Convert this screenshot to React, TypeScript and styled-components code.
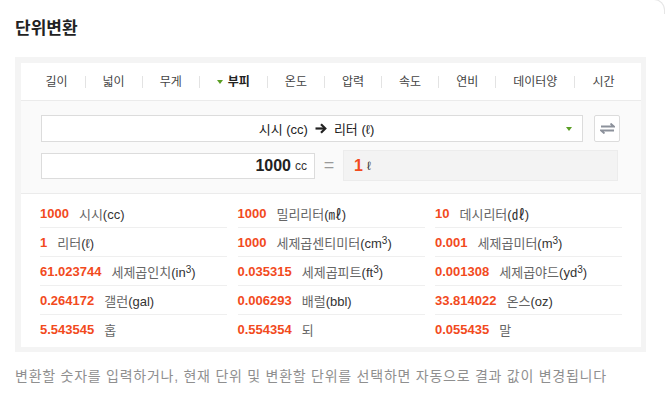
import React from "react";
import styled, { createGlobalStyle } from "styled-components";

const GlobalStyle = createGlobalStyle`
  html, body {
    margin: 0;
    padding: 0;
    background: #ffffff;
    overflow: hidden;
  }
  body {
    font-family: "Liberation Sans", "Noto Sans CJK KR", sans-serif;
    color: #333;
  }
`;

const colors = {
  panel: "#f4f4f4",
  line: "#ebebeb",
  tabText: "#444",
  green: "#5a9e24",
  value: "#f24a1d",
  label: "#666",
  unit: "#333",
  note: "#8f8f8f",
};

const tabs = ["길이", "넓이", "무게", "부피", "온도", "압력", "속도", "연비", "데이터양", "시간"];

type Result = { value: string; label: string; unit?: string; cube?: boolean };

const results: Result[] = [
  { value: "1000", label: "시시", unit: "cc" },
  { value: "1000", label: "밀리리터", unit: "㎖" },
  { value: "10", label: "데시리터", unit: "㎗" },
  { value: "1", label: "리터", unit: "ℓ" },
  { value: "1000", label: "세제곱센티미터", unit: "cm", cube: true },
  { value: "0.001", label: "세제곱미터", unit: "m", cube: true },
  { value: "61.023744", label: "세제곱인치", unit: "in", cube: true },
  { value: "0.035315", label: "세제곱피트", unit: "ft", cube: true },
  { value: "0.001308", label: "세제곱야드", unit: "yd", cube: true },
  { value: "0.264172", label: "갤런", unit: "gal" },
  { value: "0.006293", label: "배럴", unit: "bbl" },
  { value: "33.814022", label: "온스", unit: "oz" },
  { value: "5.543545", label: "홉" },
  { value: "0.554354", label: "되" },
  { value: "0.055435", label: "말" },
];

const Page = styled.div`
  position: relative;
  padding: 19px 20px 0 15px;

  /* corner of the surrounding card */
  &::after {
    content: "";
    position: absolute;
    top: -1px;
    right: 1px;
    width: 14px;
    height: 14px;
    border-top: 1px solid #e6e6e6;
    border-right: 1px solid #e6e6e6;
    border-top-right-radius: 11px;
  }
`;

const Title = styled.h2`
  margin: 0 0 18px;
  font-size: 17px;
  line-height: 20px;
  font-weight: 700;
  color: #222;
`;

const Panel = styled.div`
  width: 631px;
  box-sizing: border-box;
  background: ${colors.panel};
  padding: 6px 5px 5px 6px;
`;

const Inner = styled.div`
  background: #fff;
`;

const TabBar = styled.ul`
  display: flex;
  justify-content: center;
  align-items: center;
  height: 37px;
  margin: 0;
  padding: 0 2px 0 0;
  list-style: none;
  border-bottom: 1px solid ${colors.line};
`;

const Tab = styled.li<{ $active?: boolean }>`
  display: flex;
  align-items: center;
  gap: 5px;
  padding: 0 17px;
  font-size: 12px;
  line-height: 16px;
  color: ${({ $active }) => ($active ? "#222" : colors.tabText)};
  font-weight: ${({ $active }) => ($active ? 700 : 400)};
  white-space: nowrap;
`;

const TabSep = styled.li`
  width: 1px;
  height: 12px;
  background: #e3e3e3;
`;

const Caret = styled.span`
  width: 0;
  height: 0;
  border-left: 3px solid transparent;
  border-right: 3px solid transparent;
  border-top: 4px solid ${colors.green};
`;

const Converter = styled.div`
  background: #fafafa;
  border-bottom: 1px solid ${colors.line};
  padding: 14px 21px 12px 20px;
  display: flex;
  flex-direction: column;
  gap: 8px;
`;

const SelectRow = styled.div`
  display: flex;
  gap: 11px;
`;

const Select = styled.div`
  flex: 1;
  height: 27px;
  box-sizing: border-box;
  border: 1px solid #dcdcdc;
  background: #fff;
  display: flex;
  align-items: center;
  padding: 0 10px 0 25px;
  font-size: 13px;
  color: #222;
`;

const SelectText = styled.span`
  flex: 1;
  display: flex;
  align-items: center;
  justify-content: center;
  gap: 7px;
  white-space: nowrap;
`;

const SwapButton = styled.button`
  width: 26px;
  height: 27px;
  box-sizing: border-box;
  border: 1px solid #dcdcdc;
  border-radius: 2px;
  background: #fff;
  padding: 0;
  display: flex;
  align-items: center;
  justify-content: center;
`;

const InputRow = styled.div`
  display: grid;
  grid-template-columns: 274px 28px 275px;
  align-items: center;
  height: 31px;
`;

const Input = styled.div`
  height: 26px;
  box-sizing: border-box;
  border: 1px solid #dcdcdc;
  background: #fff;
  display: flex;
  align-items: center;
  justify-content: flex-end;
  gap: 4px;
  padding: 0 7px;
`;

const Big = styled.span<{ $color?: string }>`
  font-size: 16px;
  font-weight: 700;
  color: ${({ $color }) => $color || "#222"};
`;

const Small = styled.span`
  font-size: 12px;
  color: #333;
`;

const Equals = styled.span`
  text-align: center;
  font-size: 18px;
  color: #9a9a9a;
`;

const ResultBox = styled.div`
  height: 31px;
  box-sizing: border-box;
  background: #f3f3f3;
  border: 1px solid #ececec;
  display: flex;
  align-items: center;
  gap: 4px;
  padding: 0 10px;
`;

const Grid = styled.div`
  display: grid;
  grid-template-columns: repeat(3, 187px);
  column-gap: 10.5px;
  padding: 5px 19px 3px 19px;
`;

const Row = styled.div<{ $last?: boolean }>`
  height: 29px;
  box-sizing: border-box;
  display: flex;
  align-items: center;
  gap: 10px;
  border-bottom: 1px solid ${({ $last }) => ($last ? "transparent" : "#efefef")};
  font-size: 13px;
  white-space: nowrap;
`;

const Value = styled.span`
  font-weight: 700;
  color: ${colors.value};
`;

const Label = styled.span`
  color: ${colors.label};
`;

const Unit = styled.span`
  color: ${colors.unit};
`;

const Sup = styled.span`
  font-size: 10px;
  vertical-align: 4px;
  line-height: 0;
`;

const Note = styled.p`
  margin: 14px 0 0;
  font-size: 14px;
  line-height: 20px;
  letter-spacing: 0.75px;
  color: ${colors.note};
  white-space: nowrap;
`;

function SwapIcon() {
  return (
    <svg width="15" height="11" viewBox="0 0 15 11" fill="none">
      <path d="M1 3.5H14L10.5 0.5" stroke="#8c919b" strokeWidth="1.8" />
      <path d="M14 7.5H1L4.5 10.5" stroke="#8c919b" strokeWidth="1.8" />
    </svg>
  );
}

function ArrowIcon() {
  return (
    <svg width="12" height="11" viewBox="0 0 12 11" fill="none">
      <path d="M0.5 5.5H10" stroke="#222" strokeWidth="2.2" />
      <path d="M6 1.2L10.3 5.5L6 9.8" stroke="#222" strokeWidth="2.2" />
    </svg>
  );
}

export default function App() {
  return (
    <>
      <GlobalStyle />
      <Page>
        <Title>단위변환</Title>
        <Panel>
          <Inner>
            <TabBar>
              {tabs.map((t, i) => (
                <React.Fragment key={t}>
                  {i > 0 && <TabSep />}
                  <Tab $active={t === "부피"}>
                    {t === "부피" && <Caret />}
                    {t}
                  </Tab>
                </React.Fragment>
              ))}
            </TabBar>
            <Converter>
              <SelectRow>
                <Select>
                  <SelectText>
                    <span>시시 (cc)</span>
                    <ArrowIcon />
                    <span>리터 (ℓ)</span>
                  </SelectText>
                  <Caret />
                </Select>
                <SwapButton>
                  <SwapIcon />
                </SwapButton>
              </SelectRow>
              <InputRow>
                <Input>
                  <Big>1000</Big>
                  <Small>cc</Small>
                </Input>
                <Equals>=</Equals>
                <ResultBox>
                  <Big $color={colors.value}>1</Big>
                  <Small>ℓ</Small>
                </ResultBox>
              </InputRow>
            </Converter>
            <Grid>
              {results.map((r, i) => (
                <Row key={r.label} $last={i >= results.length - 3}>
                  <Value>{r.value}</Value>
                  <Label>
                    {r.label}
                    {r.unit && (
                      <Unit>
                        ({r.unit}
                        {r.cube && <Sup>3</Sup>})
                      </Unit>
                    )}
                  </Label>
                </Row>
              ))}
            </Grid>
          </Inner>
        </Panel>
        <Note>변환할 숫자를 입력하거나, 현재 단위 및 변환할 단위를 선택하면 자동으로 결과 값이 변경됩니다</Note>
      </Page>
    </>
  );
}
